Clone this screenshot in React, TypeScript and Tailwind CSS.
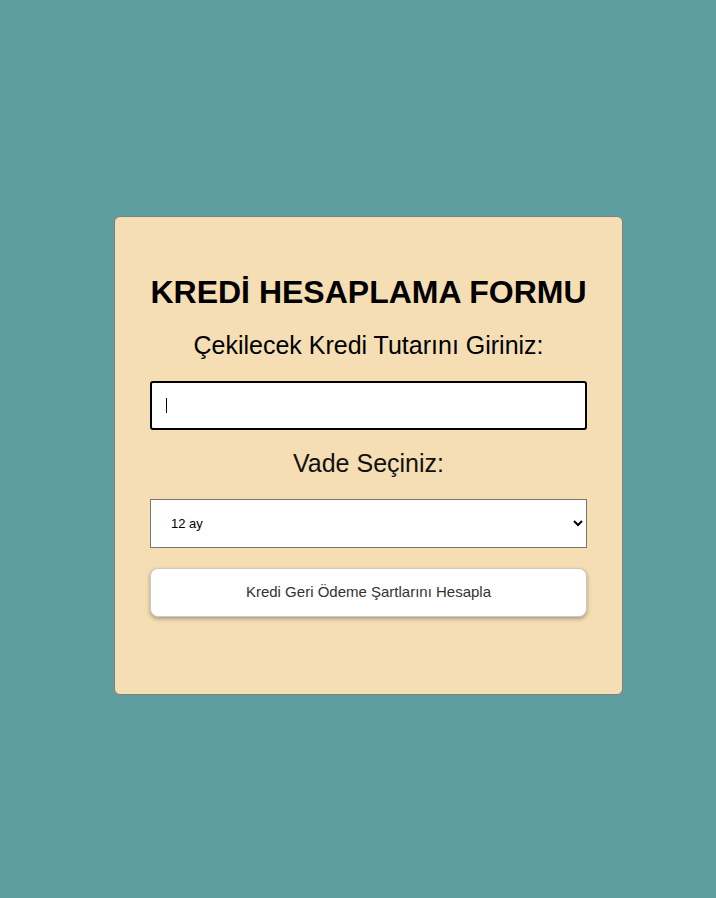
import React, { useState } from 'react';

export default function App() {
  const [amount, setAmount] = useState('');
  const [term, setTerm] = useState('12');

  return (
    <div className="min-h-[898px] w-full bg-[#5f9ea0] pt-[216px] pl-[114px]" style={{ fontFamily: '"Liberation Sans", Arial, sans-serif' }}>
      <div className="w-[509px] h-[479px] bg-[#f5deb3] border border-[#808080] rounded-[6px] px-[35px] pt-[57px] flex flex-col items-stretch">
        <h1 className="text-[32px] leading-[37px] font-bold text-black text-center">KREDİ HESAPLAMA FORMU</h1>
        <h2 className="mt-[20px] text-[25px] leading-[29px] text-black text-center">Çekilecek Kredi Tutarını Giriniz:</h2>
        <div className="relative mt-[21px]">
          <input
            value={amount}
            onChange={(e) => setAmount(e.target.value)}
            className="h-[49px] w-full bg-white border-2 border-black rounded-[3px] px-[14px] text-[15px] outline-none"
          />
          {amount === '' && (
            <span className="absolute left-[16px] top-[17px] h-[15px] w-px bg-black pointer-events-none" />
          )}
        </div>
        <h2 className="mt-[19px] text-[25px] leading-[29px] text-[#111] text-center">Vade Seçiniz:</h2>
        <select
          value={term}
          onChange={(e) => setTerm(e.target.value)}
          className="mt-[21px] h-[49px] w-full bg-white border border-[#767676] px-[16px] text-[13px] text-black"
        >
          <option value="12">12 ay</option>
          <option value="24">24 ay</option>
          <option value="36">36 ay</option>
        </select>
        <button className="mt-[20px] h-[49px] w-full bg-white border border-[#c8c8c8] rounded-[8px] shadow-[0_2px_4px_rgba(0,0,0,0.3)] text-[15px] text-[#333]">
          Kredi Geri Ödeme Şartlarını Hesapla
        </button>
      </div>
    </div>
  );
}
